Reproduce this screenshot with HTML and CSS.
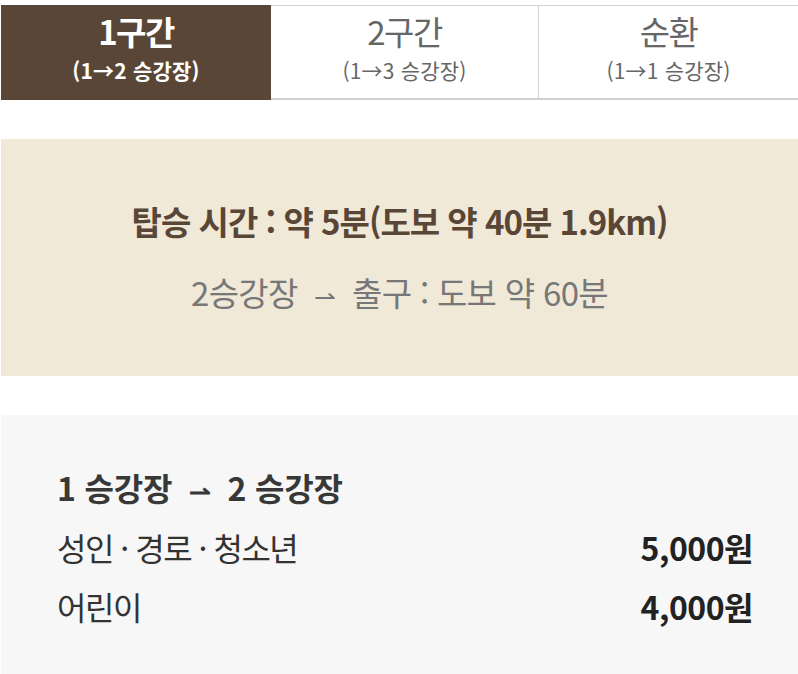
FILE: index.html
```html
<!DOCTYPE html>
<html lang="ko">
<head>
<meta charset="utf-8">
<link rel="stylesheet" href="styles.css">
</head>
<body>
<div class="page">
  <ul class="tabs">
    <li class="tab active"><strong class="tab-title">1구간</strong><span class="tab-sub">(1→2 승강장)</span></li>
    <li class="tab"><strong class="tab-title">2구간</strong><span class="tab-sub">(1→3 승강장)</span></li>
    <li class="tab"><strong class="tab-title">순환</strong><span class="tab-sub">(1→1 승강장)</span></li>
  </ul>
  <section class="time-box">
    <p class="time-main">탑승 시간 : 약 5분(도보 약 40분 1.9km)</p>
    <p class="time-sub">2승강장 <span class="arrow">⇀</span> 출구 : 도보 약 60분</p>
  </section>
  <section class="fare-box">
    <h3 class="fare-title">1 승강장 <span class="arrow">⇀</span> 2 승강장</h3>
    <div class="fare-row"><span class="fare-label">성인 · 경로 · 청소년</span><span class="fare-price">5,000원</span></div>
    <div class="fare-row"><span class="fare-label">어린이</span><span class="fare-price">4,000원</span></div>
  </section>
</div>
</body>
</html>
```
FILE: styles.css
```css
* { box-sizing: border-box; }
html, body { margin: 0; padding: 0; background: #fff; }
body {
  font-family: "Noto Sans CJK KR", "Noto Sans", sans-serif;
  color: #333;
}
.page { padding: 5px 0 0 1px; }
.tabs {
  list-style: none;
  margin: 0;
  padding: 0;
  display: grid;
  grid-template-columns: 270px 267px 1fr;
  height: 95px;
}
.tab {
  display: flex;
  flex-direction: column;
  align-items: center;
  justify-content: center;
  border-top: 1px solid #d2d2d2;
  border-bottom: 2px solid #cfcfcf;
  color: #666;
  gap: 8px;
  padding-bottom: 8px;
}
.tab + .tab { border-left: 1px solid #d2d2d2; }
.tab.active { background: #5a4636; border-color: #5a4636; color: #fff; }
.tab.active + .tab { border-left: 0; }
.tab-title { font-size: 33px; font-weight: 400; line-height: 36px; letter-spacing: -1.5px; }
.tab-sub { font-size: 21px; line-height: 26px; letter-spacing: 0.2px; }
.tab.active .tab-title, .tab.active .tab-sub { font-weight: 700; }

.time-box {
  margin-top: 39px;
  background: #f0e9d8;
  height: 237px;
  display: flex;
  flex-direction: column;
  align-items: center;
  justify-content: center;
  gap: 31px;
  text-align: center;
}
.time-box p { margin: 0; line-height: 40px; }
.time-main { font-size: 33px; font-weight: 700; color: #5a4636; letter-spacing: -1px; }
.time-sub { font-size: 33px; color: #777; letter-spacing: -0.7px; }
.arrow { display: inline-block; margin: 0 8px; font-size: 26px; }

.fare-box {
  margin-top: 39px;
  background: #f7f7f7;
  padding: 52px 45px 40px 56px;
  min-height: 260px;
}
.fare-title { margin: 0 0 7px; font-size: 32px; font-weight: 700; color: #383838; line-height: 40px; letter-spacing: -0.2px; }
.fare-row {
  display: flex;
  justify-content: space-between;
  align-items: center;
  height: 59px;
  font-size: 32px;
  letter-spacing: -1.5px;
}
.fare-label { color: #333; }
.fare-price { font-weight: 700; color: #222; letter-spacing: -0.5px; }
```
